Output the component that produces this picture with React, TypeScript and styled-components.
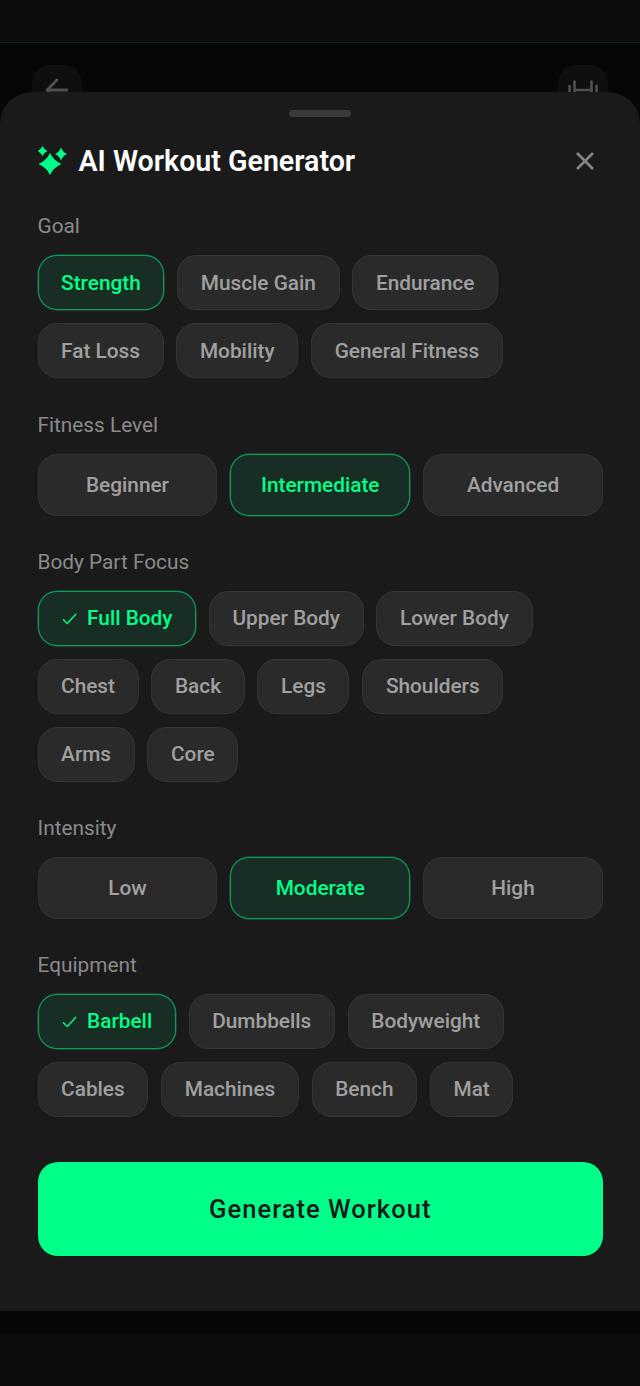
import React from "react";
import styled, { createGlobalStyle } from "styled-components";

const Global = createGlobalStyle`
  html, body { margin: 0; padding: 0; background: #0d0d0d; }
  body { font-family: Roboto, "Noto Sans", sans-serif; }
  * { box-sizing: border-box; }
`;

const Page = styled.div`
  position: relative;
  width: 640px;
  height: 1386px;
  overflow: hidden;
  display: flex;
  flex-direction: column;
  background: #0d0d0d;
`;
const StatusBand = styled.div`
  height: 43px;
  flex: none;
  background: #0d0d0d;
  border-bottom: 1px solid #0d231a;
`;
const Backdrop = styled.div`
  height: 1291px;
  flex: none;
  background: #050606;
  padding: 22px 32px 0;
  display: flex;
  justify-content: space-between;
  align-items: flex-start;
`;
const GhostButton = styled.div`
  width: 50px;
  height: 50px;
  border-radius: 18px;
  background: #0e0f0f;
  color: #505050;
  display: flex;
  align-items: center;
  justify-content: center;
`;
const Sheet = styled.section`
  position: absolute;
  left: 0;
  right: 0;
  top: 92px;
  height: 1219px;
  background: #1a1a1a;
  border-radius: 32px 32px 0 0;
  padding: 18px 37px 0 37.5px;
  display: flex;
  flex-direction: column;
`;
const Handle = styled.div`
  width: 62px;
  height: 7px;
  border-radius: 4px;
  background: #3a3a3a;
  align-self: center;
  flex: none;
`;
const Header = styled.header`
  height: 36px;
  margin-top: 26px;
  display: flex;
  align-items: center;
  flex: none;
`;
const Title = styled.h1`
  margin: 0 0 0 11px;
  flex: 1;
  font-size: 28.6px;
  line-height: 36px;
  font-weight: 600;
  color: #fff;
`;
const Close = styled.div`
  width: 24px;
  height: 24px;
  margin-right: 6px;
  color: #858585;
  display: flex;
`;
const Label = styled.div<{ $gap?: number }>`
  margin-top: ${(p) => p.$gap ?? 32}px;
  height: 28px;
  font-size: 20.8px;
  line-height: 28px;
  font-weight: 400;
  color: #8a8a8a;
  flex: none;
`;
const Wrap = styled.div`
  margin-top: 15px;
  display: flex;
  flex-wrap: wrap;
  gap: 12.8px;
  flex: none;
`;
const Triple = styled.div`
  margin-top: 15px;
  display: grid;
  grid-template-columns: repeat(3, 1fr);
  gap: 12.8px;
  flex: none;
`;
const Chip = styled.div<{ $on?: boolean }>`
  height: 55.2px;
  padding: 0 22.6px;
  border-radius: 19.2px;
  border: 1px solid ${(p) => (p.$on ? "#109a5c" : "#353535")};
  box-shadow: ${(p) => (p.$on ? "0 0 0 0.5px rgba(16, 154, 92, 0.7)" : "none")};
  background: ${(p) => (p.$on ? "#182e24" : "#2a2a2a")};
  color: ${(p) => (p.$on ? "#00ff88" : "#a0a0a0")};
  font-size: 20.8px;
  font-weight: 500;
  display: flex;
  align-items: center;
  gap: 9px;
`;
const Segment = styled(Chip)`
  height: 62px;
  justify-content: center;
  padding: 0;
`;
const Generate = styled.button`
  margin-top: 45.4px;
  height: 93.6px;
  flex: none;
  border: none;
  border-radius: 20px;
  background: #00ff88;
  color: #1a1a1a;
  font-family: inherit;
  font-size: 25.6px;
  font-weight: 500;
  letter-spacing: 1px;
`;

const Sparkles = () => (
  <svg width="30" height="30" viewBox="0 0 30 30" fill="#00ff88" style={{ flex: "none" }}>
    <path d="M12 7 Q15.5 14.5 23.5 18 Q15.5 21.5 12 29 Q8.5 21.5 0.5 18 Q8.5 14.5 12 7Z" />
    <path d="M4.5 0 Q6 3.5 9.5 5 Q6 6.5 4.5 10 Q3 6.5 -0.5 5 Q3 3.5 4.5 0Z" />
    <path d="M23 1.5 Q24.8 6.2 29 8 Q24.8 9.8 23 14.5 Q21.2 9.8 17 8 Q21.2 6.2 23 1.5Z" />
  </svg>
);
const Check = () => (
  <svg width="17" height="17" viewBox="0 0 17 17" fill="none" stroke="#00ff88" strokeWidth="1.4">
    <path d="M2 9.2 L6.3 13.5 L15 4" />
  </svg>
);

type Item = string | [string, boolean?, boolean?];
const chips = (items: Item[]) =>
  items.map((it) => {
    const [text, on, check] = typeof it === "string" ? [it, false, false] : it;
    return (
      <Chip key={text} $on={on}>
        {check && <Check />}
        {text}
      </Chip>
    );
  });
const segments = (items: string[], active: string) =>
  items.map((t) => (
    <Segment key={t} $on={t === active}>
      {t}
    </Segment>
  ));

export default function App() {
  return (
    <Page>
      <Global />
      <StatusBand />
      <Backdrop>
        <GhostButton>
          <svg width="34" height="34" viewBox="0 0 24 24" fill="none" stroke="currentColor" strokeWidth="2" strokeLinecap="round" strokeLinejoin="round">
            <path d="M19 12H5M12 5l-7 7 7 7" />
          </svg>
        </GhostButton>
        <GhostButton>
          <svg width="32" height="32" viewBox="0 0 32 32" fill="none" stroke="currentColor" strokeWidth="2.6" strokeLinecap="round">
            <path d="M2.5 12v8M7.5 7.5v17M24.5 7.5v17M29.5 12v8M7.5 16h17" />
          </svg>
        </GhostButton>
      </Backdrop>
      <Sheet>
        <Handle />
        <Header>
          <Sparkles />
          <Title>AI Workout Generator</Title>
          <Close>
            <svg width="24" height="24" viewBox="0 0 24 24" fill="none" stroke="currentColor" strokeWidth="2.6">
              <path d="M4 4l16 16M20 4L4 20" />
            </svg>
          </Close>
        </Header>
        <Label $gap={33}>Goal</Label>
        <Wrap>{chips([["Strength", true], "Muscle Gain", "Endurance", "Fat Loss", "Mobility", "General Fitness"])}</Wrap>
        <Label $gap={32.5}>Fitness Level</Label>
        <Triple>{segments(["Beginner", "Intermediate", "Advanced"], "Intermediate")}</Triple>
        <Label>Body Part Focus</Label>
        <Wrap>{chips([["Full Body", true, true], "Upper Body", "Lower Body", "Chest", "Back", "Legs", "Shoulders", "Arms", "Core"])}</Wrap>
        <Label>Intensity</Label>
        <Triple>{segments(["Low", "Moderate", "High"], "Moderate")}</Triple>
        <Label>Equipment</Label>
        <Wrap>{chips([["Barbell", true, true], "Dumbbells", "Bodyweight", "Cables", "Machines", "Bench", "Mat"])}</Wrap>
        <Generate>Generate Workout</Generate>
      </Sheet>
    </Page>
  );
}
